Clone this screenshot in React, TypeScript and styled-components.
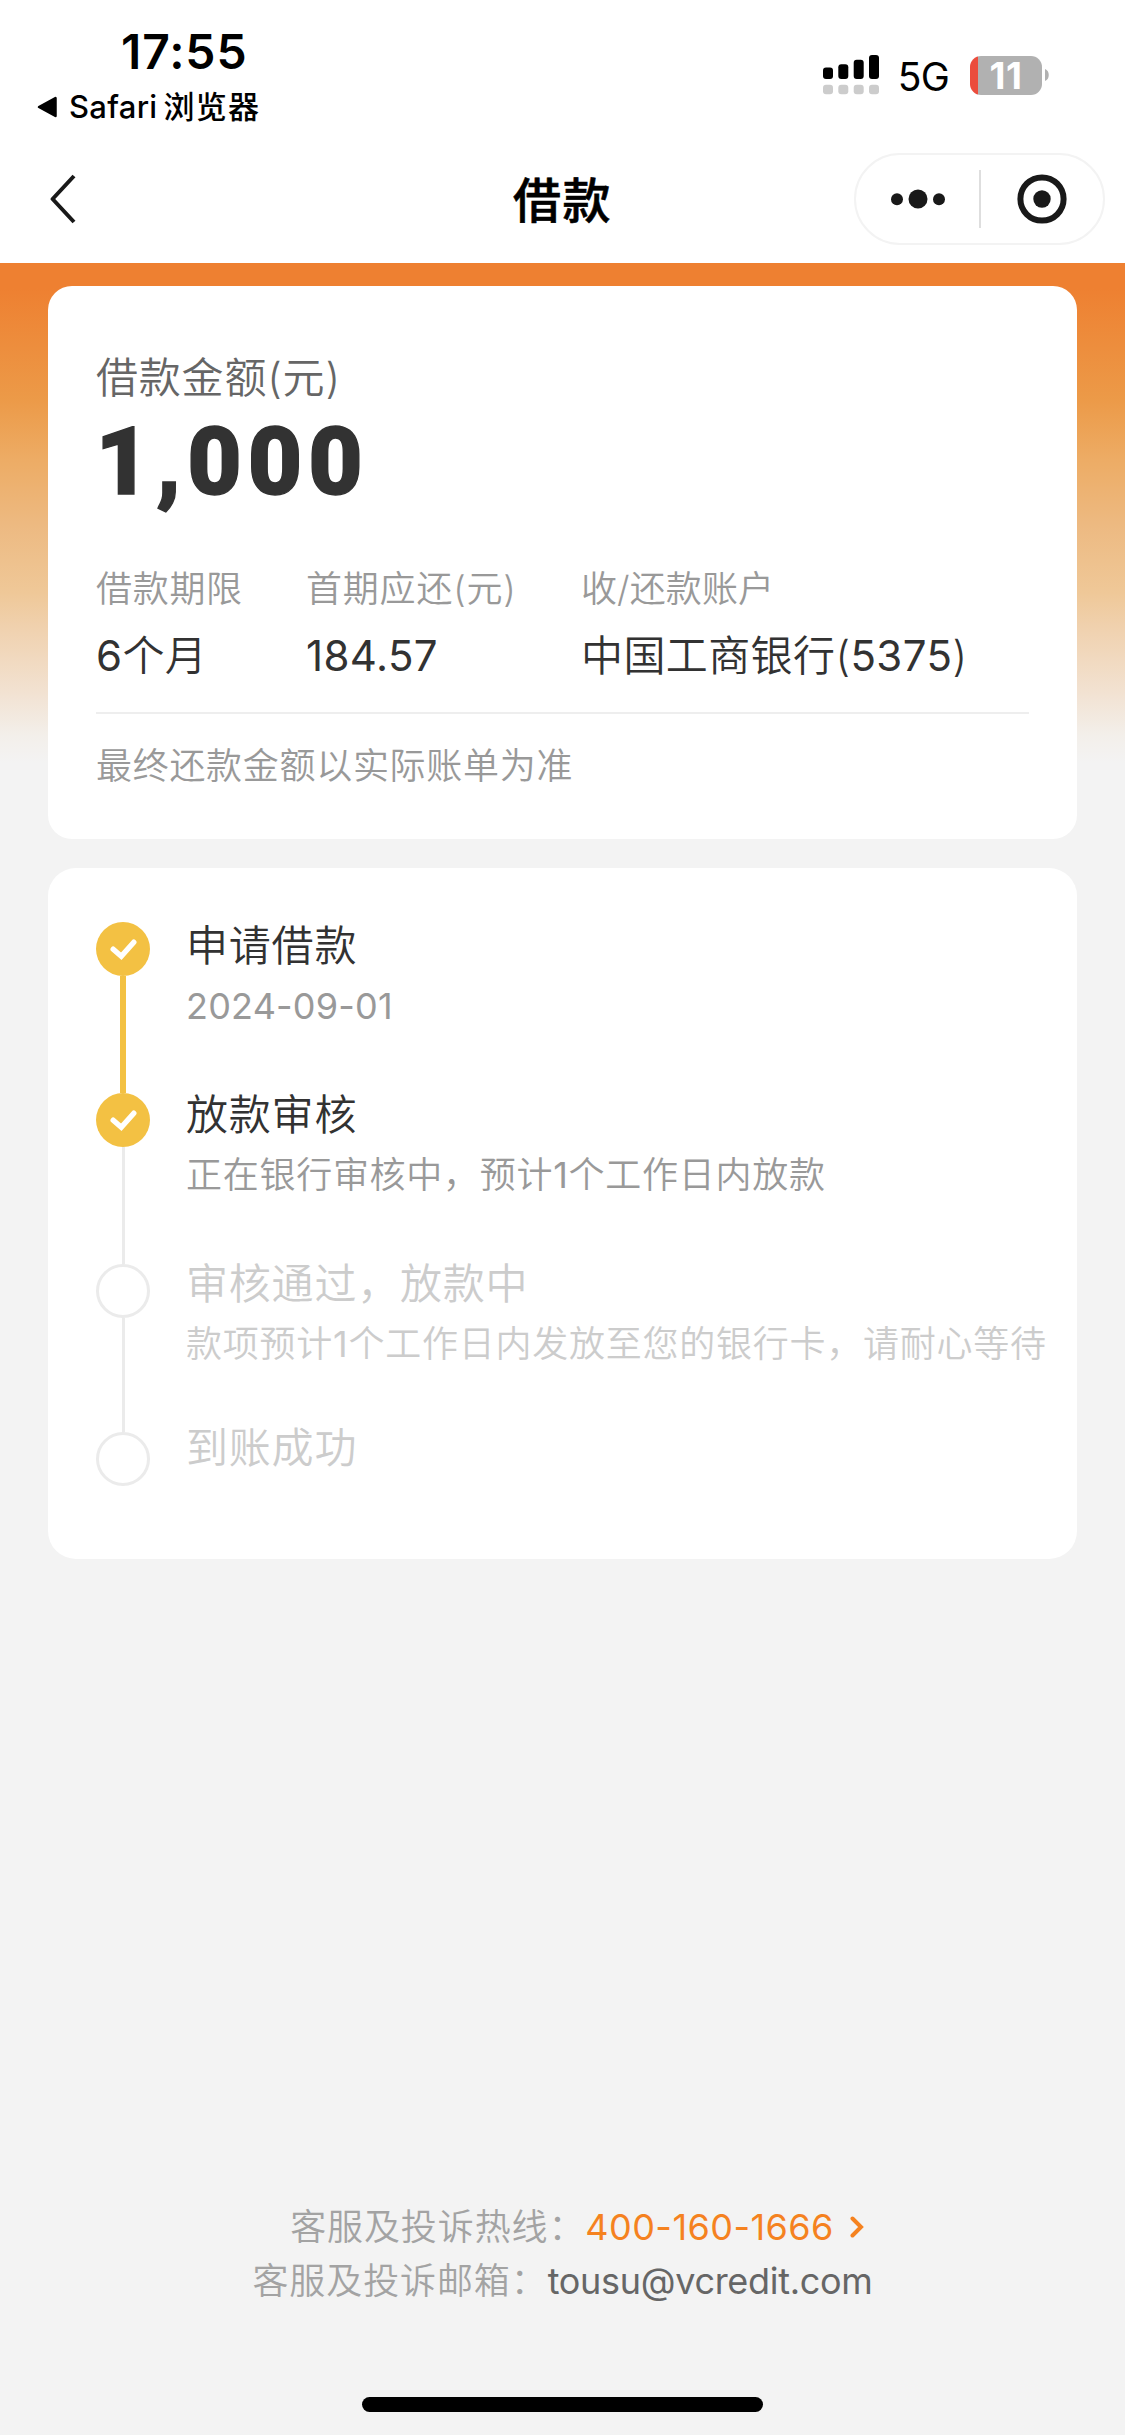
import React from 'react';
import styled, { createGlobalStyle } from 'styled-components';

const GlobalStyle = createGlobalStyle`
  * { box-sizing: border-box; }
  body {
    margin: 0;
    background: #f3f3f3;
    font-family: Inter, "Noto Sans CJK SC", sans-serif;
    color: #323232;
    -webkit-font-smoothing: antialiased;
  }
  svg { display: block; flex: none; }
`;

const Page = styled.div`
  width: 1125px;
  height: 2435px;
  display: flex;
  flex-direction: column;
  background: #f3f3f3;
  overflow: hidden;
`;

const StatusBar = styled.header`
  height: 138px;
  display: flex;
  justify-content: space-between;
  background: #fff;
  color: #000;
`;

const StatusLeft = styled.div`
  padding: 24px 0 0 37px;
`;

const Clock = styled.div`
  padding-left: 84px;
  font-size: 48px;
  font-weight: 600;
  line-height: 56px;
  letter-spacing: 0.9px;
`;

const BackToApp = styled.div`
  display: flex;
  align-items: center;
  height: 54px;
  font-size: 31px;
  font-weight: 500;
  line-height: 54px;
  white-space: nowrap;
`;

const AppName = styled.span`
  margin: 0 6px 0 11px;
  letter-spacing: 0.3px;
`;

const AppKind = styled.span`
  letter-spacing: 1.3px;
`;

const StatusRight = styled.div`
  display: flex;
  align-items: center;
  height: 40px;
  margin: 55px 75px 0 0;
`;

const Network = styled.span`
  margin: 3px 21px 0 18px;
  font-size: 39px;
  line-height: 40px;
  letter-spacing: -0.8px;
`;

const Battery = styled.div`
  width: 72px;
  height: 39px;
  border-radius: 11px;
  background: linear-gradient(to right, #eb4d3d 8px, #b1b1b1 8px);
  display: flex;
  align-items: center;
  justify-content: center;
  color: #fff;
  font-size: 37px;
  font-weight: 700;
  line-height: 39px;
  letter-spacing: 0.5px;
`;

const NavBar = styled.nav`
  height: 125px;
  padding: 0 20px 4px;
  display: grid;
  grid-template-columns: 1fr auto 1fr;
  align-items: center;
  background: #fff;
`;

const BackIcon = styled.svg`
  margin-left: 30px;
`;

const NavTitle = styled.h1`
  margin: 5px 0 0;
  font-size: 48px;
  font-weight: 500;
  line-height: 70px;
  letter-spacing: 1.5px;
  color: #000;
  -webkit-text-stroke: 0.6px #000;
`;

const Capsule = styled.div`
  justify-self: end;
  width: 251px;
  height: 92px;
  border: 2px solid #f3f3f3;
  border-radius: 46px;
  display: grid;
  grid-template-columns: 123px 2px 1fr;
  align-items: center;
  justify-items: center;
`;

const CapsuleLine = styled.i`
  width: 2px;
  height: 58px;
  background: #dedede;
`;

const Main = styled.main`
  flex: 1;
  display: flex;
  flex-direction: column;
  padding: 23px 48px 0;
  background: linear-gradient(
      to bottom,
      #ee8031 0,
      #ee8031 25px,
      #ec9a48 137px,
      #edac65 197px,
      #edba82 264px,
      #efc898 330px,
      #f0d1ae 364px,
      #f2e2d2 430px,
      #f3efea 472px,
      #f3f3f3 500px
    )
    #f3f3f3;
`;

const Card = styled.section<{ $height: number; $radius: number }>`
  height: ${(p) => p.$height}px;
  padding: 0 48px;
  border-radius: ${(p) => p.$radius}px;
  background: #fff;

  & + & {
    margin-top: 29px;
  }
`;

const AmountLabel = styled.div`
  padding-top: 63px;
  font-size: 42px;
  font-weight: 350;
  line-height: 58px;
  letter-spacing: 0.8px;
  color: #666;
`;

const Amount = styled.div`
  height: 98px;
  margin: 6px 0 53px;
  text-indent: -0.5px;
  font-family: Roboto, sans-serif;
  font-size: 94px;
  font-weight: 900;
  line-height: 98px;
  letter-spacing: 6px;
  -webkit-text-stroke: 1.4px #323232;
`;

const Facts = styled.dl`
  display: grid;
  grid-template-columns: 210px 275px 1fr;
  margin: 0;
  height: 150px;
  border-bottom: 2px solid #eee;
`;

const Fact = styled.div`
  display: flex;
  flex-direction: column;
  gap: 13px;
  white-space: nowrap;
`;

const FactName = styled.dt<{ $spacing: number }>`
  font-size: 36px;
  font-weight: 350;
  line-height: 50px;
  letter-spacing: ${(p) => p.$spacing}px;
  color: #999;
`;

const FactValue = styled.dd`
  margin: 0;
  font-size: 42px;
  font-weight: 350;
  line-height: 58px;
  letter-spacing: 0.4px;
`;

const Digits = styled.span`
  font-weight: 400;
`;

const Note = styled.p`
  margin: 27px 0 0;
  font-size: 36px;
  font-weight: 350;
  line-height: 50px;
  letter-spacing: 0.7px;
  color: #999;
`;

const Steps = styled.ol`
  list-style: none;
  margin: 0;
  padding: 54px 0 0;
`;

const Step = styled.li<{ $height: number }>`
  height: ${(p) => p.$height}px;
  display: flex;
  gap: 36px;
`;

const Rail = styled.div`
  width: 54px;
  display: flex;
  flex-direction: column;
  align-items: center;
`;

const Marker = styled.span<{ $done: boolean }>`
  flex: none;
  width: 54px;
  height: 54px;
  border-radius: 50%;
  display: grid;
  place-items: center;
  border: ${(p) => (p.$done ? 'none' : '3px solid #ebebeb')};
  background: ${(p) => (p.$done ? '#f3c143' : '#fff')};
`;

const Connector = styled.span<{ $active: boolean }>`
  flex: 1;
  width: ${(p) => (p.$active ? 6 : 3)}px;
  background: ${(p) => (p.$active ? '#f3c143' : '#ebebeb')};
`;

const StepText = styled.div<{ $lift: number }>`
  margin-top: -${(p) => p.$lift}px;
  font-weight: 350;
  white-space: nowrap;
`;

const StepTitle = styled.div<{ $muted: boolean }>`
  font-size: 42px;
  line-height: 60px;
  letter-spacing: 0.8px;
  color: ${(p) => (p.$muted ? '#ccc' : '#323232')};
`;

const StepDetail = styled.div<{ $muted: boolean; $spacing: number }>`
  font-size: 36px;
  line-height: 60px;
  letter-spacing: ${(p) => p.$spacing}px;
  color: ${(p) => (p.$muted ? '#ccc' : '#999')};
`;

const Footer = styled.footer`
  margin-top: auto;
  height: 235px;
  display: flex;
  flex-direction: column;
  align-items: center;
`;

const Contact = styled.div<{ $indent?: number }>`
  display: flex;
  align-items: center;
  padding-left: ${(p) => p.$indent ?? 0}px;
  font-size: 36px;
  font-weight: 350;
  line-height: 54px;
  letter-spacing: 0.9px;
  color: #a3a3a3;
  white-space: nowrap;
`;

const Phone = styled.a`
  display: flex;
  align-items: center;
  gap: 16px;
  font-weight: 400;
  letter-spacing: 0.45px;
  color: #f5821f;
`;

const Email = styled.span`
  font-weight: 400;
  letter-spacing: -0.3px;
  color: #666;
`;

const HomeIndicator = styled.div`
  width: 401px;
  height: 15px;
  margin: auto 0 23px;
  border-radius: 8px;
  background: #000;
`;

const facts = [
  { name: '借款期限', value: '6个月', spacing: 0.7 },
  { name: '首期应还(元)', value: '184.57', spacing: 0.8 },
  { name: '收/还款账户', value: '中国工商银行(5375)', spacing: 0.1 },
];

const steps = [
  { title: '申请借款', detail: '2024-09-01', done: true, height: 171, lift: 6, spacing: 0.2 },
  { title: '放款审核', detail: '正在银行审核中，预计1个工作日内放款', done: true, height: 171, lift: 8, spacing: 0.72 },
  { title: '审核通过，放款中', detail: '款项预计1个工作日内发放至您的银行卡，请耐心等待', done: false, height: 168, lift: 10, spacing: 0.75 },
  { title: '到账成功', detail: '', done: false, height: 54, lift: 14, spacing: 0 },
];

/** Sets runs of digits one step heavier than the Chinese text around them. */
const withDigits = (text: string) =>
  text
    .split(/([\d.-]+)/)
    .filter(Boolean)
    .map((part, i) => (/\d/.test(part) ? <Digits key={i}>{part}</Digits> : part));

const SignalIcon = () => (
  <svg width="57" height="40" viewBox="0 0 57 40">
    <rect x="0" y="12.5" width="10" height="11.5" rx="3" />
    <rect x="15.3" y="9.3" width="10" height="14.7" rx="3" />
    <rect x="30.7" y="4.7" width="10" height="19.3" rx="3" />
    <rect x="46" y="0" width="10" height="24" rx="3" />
    {[0, 15.3, 30.7, 46].map((x) => (
      <rect key={x} x={x} y="29.7" width="10" height="9.6" rx="3" fill="#ccc" />
    ))}
  </svg>
);

const CheckIcon = () => (
  <svg width="54" height="54" viewBox="0 0 54 54" fill="none">
    <path
      d="M17.2 27.2 25.3 34.2 37.8 20.2"
      stroke="#fff"
      strokeWidth="5.4"
      strokeLinecap="round"
    />
  </svg>
);

export default function App() {
  return (
    <>
      <GlobalStyle />
      <Page>
        <StatusBar>
          <StatusLeft>
            <Clock>17:55</Clock>
            <BackToApp>
              <svg width="21" height="22" viewBox="0 0 21 22">
                <path d="M18.500 2v18L2 11z" stroke="#000" strokeWidth="2.5" strokeLinejoin="round" />
              </svg>
              <AppName>Safari</AppName>
              <AppKind>浏览器</AppKind>
            </BackToApp>
          </StatusLeft>
          <StatusRight>
            <SignalIcon />
            <Network>5G</Network>
            <Battery>11</Battery>
            <svg width="8" height="14" viewBox="0 0 8 14">
              <path d="M3 1c5 1.500 5 10.500 0 12z" fill="#b1b1b1" />
            </svg>
          </StatusRight>
        </StatusBar>
        <NavBar>
          <BackIcon width="27" height="50" viewBox="0 0 27 50" fill="none">
            <path d="M24 2 2.600 25 24 48" stroke="#191919" strokeWidth="4" strokeLinejoin="round" />
          </BackIcon>
          <NavTitle>借款</NavTitle>
          <Capsule>
            <svg width="56" height="20" viewBox="0 0 56 20" fill="#191919">
              <circle cx="7" cy="10.300" r="6" />
              <circle cx="28" cy="10" r="9.500" />
              <circle cx="49" cy="10.300" r="6" />
            </svg>
            <CapsuleLine />
            <svg width="50" height="50" viewBox="0 0 50 50">
              <circle cx="25" cy="25" r="21.600" fill="none" stroke="#191919" strokeWidth="6" />
              <circle cx="25" cy="25" r="8.700" fill="#191919" />
            </svg>
          </Capsule>
        </NavBar>
        <Main>
          <Card $height={553} $radius={24}>
            <AmountLabel>借款金额(元)</AmountLabel>
            <Amount>1,000</Amount>
            <Facts>
              {facts.map((f) => (
                <Fact key={f.name}>
                  <FactName $spacing={f.spacing}>{f.name}</FactName>
                  <FactValue>{withDigits(f.value)}</FactValue>
                </Fact>
              ))}
            </Facts>
            <Note>最终还款金额以实际账单为准</Note>
          </Card>
          <Card $height={691} $radius={28}>
            <Steps>
              {steps.map((s, i) => (
                <Step key={s.title} $height={s.height}>
                  <Rail>
                    <Marker $done={s.done}>{s.done && <CheckIcon />}</Marker>
                    {i < steps.length - 1 && <Connector $active={s.done && steps[i + 1].done} />}
                  </Rail>
                  <StepText $lift={s.lift}>
                    <StepTitle $muted={!s.done}>{s.title}</StepTitle>
                    {s.detail && (
                      <StepDetail $muted={!s.done} $spacing={s.spacing}>
                        {withDigits(s.detail)}
                      </StepDetail>
                    )}
                  </StepText>
                </Step>
              ))}
            </Steps>
          </Card>
          <Footer>
            <Contact $indent={29}>
              <span>客服及投诉热线：</span>
              <Phone>
                400-160-1666
                <svg width="14" height="22" viewBox="0 0 14 22" fill="none">
                  <path d="M2.500 2.500 11 11 2.500 19.500" stroke="#f5821f" strokeWidth="4" strokeLinecap="round" />
                </svg>
              </Phone>
            </Contact>
            <Contact>
              <span>客服及投诉邮箱：</span>
              <Email>tousu@vcredit.com</Email>
            </Contact>
            <HomeIndicator />
          </Footer>
        </Main>
      </Page>
    </>
  );
}
